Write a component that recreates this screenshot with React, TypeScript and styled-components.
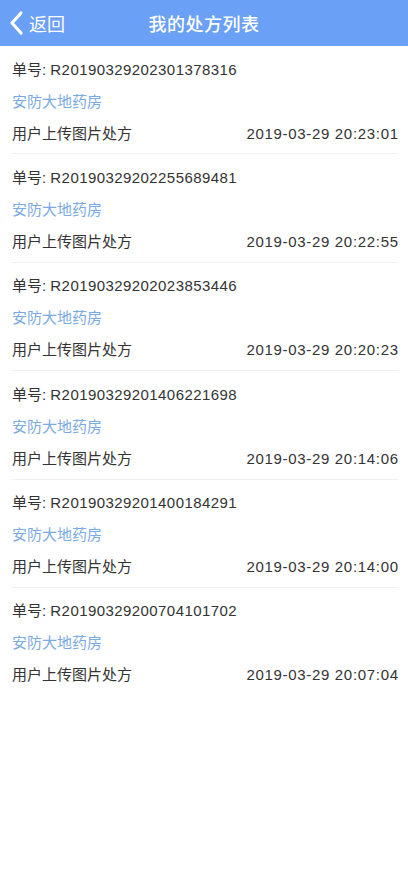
import styled, { createGlobalStyle } from 'styled-components';

const GlobalStyle = createGlobalStyle`
  html, body {
    margin: 0;
    padding: 0;
    background: #ffffff;
    font-family: "Liberation Sans", "Noto Sans CJK SC", sans-serif;
  }
`;

type Prescription = {
  no: string;
  store: string;
  source: string;
  time: string;
};

const prescriptions: Prescription[] = [
  { no: 'R20190329202301378316', store: '安防大地药房', source: '用户上传图片处方', time: '2019-03-29 20:23:01' },
  { no: 'R20190329202255689481', store: '安防大地药房', source: '用户上传图片处方', time: '2019-03-29 20:22:55' },
  { no: 'R20190329202023853446', store: '安防大地药房', source: '用户上传图片处方', time: '2019-03-29 20:20:23' },
  { no: 'R20190329201406221698', store: '安防大地药房', source: '用户上传图片处方', time: '2019-03-29 20:14:06' },
  { no: 'R20190329201400184291', store: '安防大地药房', source: '用户上传图片处方', time: '2019-03-29 20:14:00' },
  { no: 'R20190329200704101702', store: '安防大地药房', source: '用户上传图片处方', time: '2019-03-29 20:07:04' },
];

export default function App() {
  return (
    <>
      <GlobalStyle />
      <Page>
        <Header>
          <BackButton>
            <svg width="16" height="26" viewBox="0 0 16 26" fill="none">
              <path d="M13 3 L4 13 L13 23" stroke="#fff" strokeWidth="3.2" strokeLinecap="round" strokeLinejoin="round" />
            </svg>
            <BackText>返回</BackText>
          </BackButton>
          <Title>我的处方列表</Title>
        </Header>
        <List>
          {prescriptions.map((p) => (
            <Item key={p.no}>
              <Line>
                单号: <Number>{p.no}</Number>
              </Line>
              <Line $accent>{p.store}</Line>
              <Row>
                <span>{p.source}</span>
                <Time>{p.time}</Time>
              </Row>
            </Item>
          ))}
        </List>
      </Page>
    </>
  );
}

const Page = styled.div`
  min-height: 883px;
  background: #ffffff;
`;

const Header = styled.header`
  height: 46px;
  background: #6aa0f6;
  display: flex;
  align-items: center;
  justify-content: center;
  position: relative;
`;

const BackButton = styled.div`
  position: absolute;
  left: 8px;
  top: 0;
  height: 46px;
  display: flex;
  align-items: center;
  gap: 5px;
`;

const BackText = styled.span`
  color: #ffffff;
  font-size: 18px;
`;

const Title = styled.h1`
  margin: 0;
  color: #ffffff;
  font-size: 18px;
  font-weight: 500;
  letter-spacing: 0.5px;
`;

const List = styled.div`
  display: flex;
  flex-direction: column;
  padding: 0 10px 0 12px;
`;

const Item = styled.div`
  padding: 7.5px 0 3.9px;
  border-bottom: 1px solid #f0f0f0;

  &:last-child {
    border-bottom: none;
  }
`;

const Line = styled.div<{ $accent?: boolean }>`
  height: 32px;
  line-height: 32px;
  font-size: 15px;
  color: ${({ $accent }) => ($accent ? '#7aaae4' : '#333333')};
`;

const Number = styled.span`
  letter-spacing: 0.43px;
`;

const Row = styled.div`
  height: 32px;
  line-height: 32px;
  font-size: 15px;
  color: #333333;
  display: flex;
  justify-content: space-between;
`;

const Time = styled.span`
  letter-spacing: 0.68px;
  margin-right: -0.7px;
`;
